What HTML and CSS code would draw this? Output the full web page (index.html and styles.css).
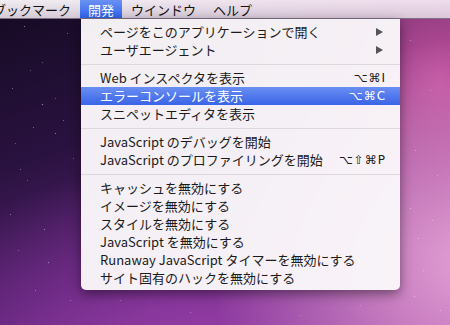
FILE: index.html
```html
<!DOCTYPE html>
<html lang="ja">

<head>
    <meta charset="UTF-8">
    <title>開発メニュー</title>
    <link rel="stylesheet" href="styles.css">
</head>

<body>
    <div class="desktop">
        <div class="stars"></div>

        <header class="menubar">
            <div class="bar-item first">ブックマーク</div>
            <div class="bar-item open">
                開発
                <div class="menu">
                    <div class="row"><span>ページをこのアプリケーションで開く</span><span class="arrow"></span></div>
                    <div class="row"><span>ユーザエージェント</span><span class="arrow"></span></div>
                    <div class="sep"></div>
                    <div class="row"><span>Web インスペクタを表示</span><span class="key">⌥⌘I</span></div>
                    <div class="row active"><span>エラーコンソールを表示</span><span class="key">⌥⌘C</span></div>
                    <div class="row"><span>スニペットエディタを表示</span></div>
                    <div class="sep"></div>
                    <div class="row"><span>JavaScript のデバッグを開始</span></div>
                    <div class="row"><span>JavaScript のプロファイリングを開始</span><span class="key">⌥⇧⌘P</span></div>
                    <div class="sep"></div>
                    <div class="row"><span>キャッシュを無効にする</span></div>
                    <div class="row"><span>イメージを無効にする</span></div>
                    <div class="row"><span>スタイルを無効にする</span></div>
                    <div class="row"><span>JavaScript を無効にする</span></div>
                    <div class="row"><span>Runaway JavaScript タイマーを無効にする</span></div>
                    <div class="row"><span>サイト固有のハックを無効にする</span></div>
                </div>
            </div>
            <div class="bar-item">ウインドウ</div>
            <div class="bar-item">ヘルプ</div>
        </header>
    </div>
</body>

</html>
```

FILE: styles.css
```css
body {
    margin: 0;
    padding: 0;
    font-family: "Noto Sans CJK JP", "Noto Sans", sans-serif;
    font-size: 13px;
    color: #1a1a1a;
}

.desktop {
    position: relative;
    width: 450px;
    height: 325px;
    overflow: hidden;
    background:
        radial-gradient(ellipse 260px 220px at 470px 260px, rgba(235, 170, 220, 0.9), rgba(235, 170, 220, 0)),
        radial-gradient(ellipse 220px 260px at 440px 80px, rgba(205, 85, 165, 0.9), rgba(205, 85, 165, 0)),
        radial-gradient(ellipse 300px 200px at 200px 360px, rgba(150, 60, 170, 0.9), rgba(150, 60, 170, 0)),
        linear-gradient(160deg, #140a22 0%, #2a1240 35%, #5a2274 65%, #a0489e 100%);
}

/* star dots */
.stars {
    position: absolute;
    left: 0;
    top: 0;
    width: 1px;
    height: 1px;
    border-radius: 50%;
    background: transparent;
    box-shadow:
        24px 26px 0 rgba(255,255,255,0.6), 67px 33px 0 rgba(255,255,255,0.5),
        42px 62px 0 rgba(255,255,255,0.4), 12px 88px 0 rgba(255,255,255,0.5),
        30px 70px 0 rgba(255,255,255,0.4), 55px 98px 0 rgba(255,255,255,0.4),
        42px 104px 1px rgba(255,255,255,0.9), 63px 120px 0 rgba(255,255,255,0.5),
        15px 143px 0 rgba(255,255,255,0.4), 33px 127px 0 rgba(255,255,255,0.5),
        55px 133px 0 rgba(255,255,255,0.6), 20px 169px 0 rgba(255,255,255,0.5),
        73px 158px 0 rgba(255,255,255,0.4), 27px 180px 0 rgba(255,255,255,0.4),
        44px 229px 0 rgba(255,255,255,0.6), 10px 214px 0 rgba(255,255,255,0.5),
        48px 262px 1px rgba(255,255,255,0.8), 18px 250px 0 rgba(255,255,255,0.4),
        35px 290px 0 rgba(255,255,255,0.5), 70px 300px 0 rgba(255,255,255,0.4),
        120px 300px 0 rgba(255,255,255,0.4), 190px 312px 0 rgba(255,255,255,0.4),
        410px 208px 1px rgba(255,255,255,0.9), 418px 238px 0 rgba(255,255,255,0.6),
        423px 270px 0 rgba(255,255,255,0.5), 414px 296px 1px rgba(255,255,255,0.8),
        432px 220px 0 rgba(255,255,255,0.5), 440px 310px 0 rgba(255,255,255,0.5),
        410px 40px 0 rgba(255,255,255,0.5), 430px 90px 0 rgba(255,255,255,0.4),
        415px 150px 0 rgba(255,255,255,0.5), 437px 175px 0 rgba(255,255,255,0.4),
        360px 305px 0 rgba(255,255,255,0.4), 300px 315px 0 rgba(255,255,255,0.4);
}

.menubar {
    position: relative;
    display: flex;
    height: 19px;
    line-height: 19px;
    background:
        linear-gradient(to right, rgba(255, 255, 255, 0), rgba(235, 190, 225, 0.35)),
        linear-gradient(#f1edf2, #d3cbd5);
    border-bottom: 1px solid #7f6f86;
    box-sizing: border-box;
    font-size: 13px;
    color: #111;
}

.bar-item {
    position: relative;
    padding: 0 8px;
    margin-right: 1px;
}

.bar-item.first {
    margin-left: -15px;
}

.bar-item.open {
    color: #fff;
    background: linear-gradient(#6a92f4, #2f62ea);
}

.menu {
    position: absolute;
    left: 1px;
    top: 19px;
    width: 319px;
    padding: 4px 0 3px;
    background: rgba(250, 247, 250, 0.97);
    border-radius: 0 0 5px 5px;
    box-shadow: 0 4px 12px rgba(0, 0, 0, 0.45);
    color: #1a1a1a;
    line-height: 18px;
}

.row {
    display: flex;
    justify-content: space-between;
    align-items: center;
    height: 18px;
    padding: 0 14px 0 19px;
    white-space: nowrap;
}

.row.active {
    color: #fff;
    background: linear-gradient(#6a8ff2, #3a64e8);
}

.key {
    font-family: "DejaVu Sans", sans-serif;
    font-size: 12px;
    letter-spacing: 1px;
}

.arrow {
    width: 0;
    height: 0;
    margin-right: 3px;
    border-top: 4px solid transparent;
    border-bottom: 4px solid transparent;
    border-left: 7px solid #555;
}

.sep {
    height: 1px;
    margin: 5px 0 4px;
    background: #dcd8dc;
}
```
